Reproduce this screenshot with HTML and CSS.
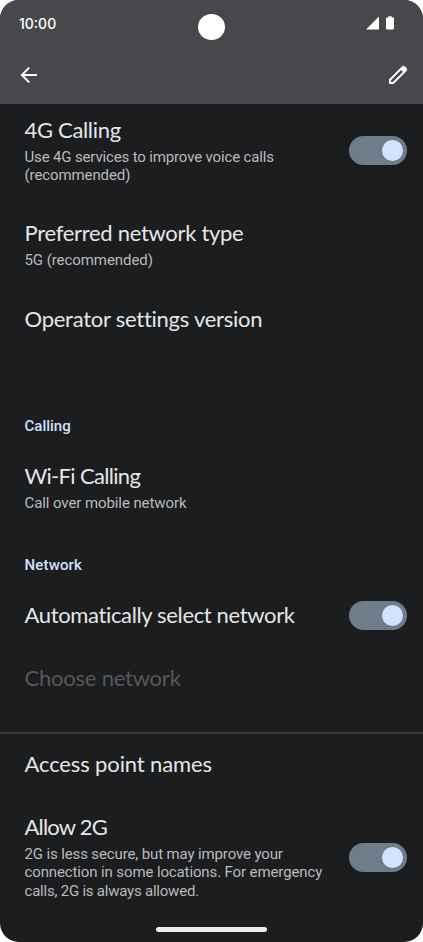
FILE: index.html
```html
<!DOCTYPE html>
<html lang="en">
<head>
<meta charset="utf-8">
<title>Mobile network settings</title>
<link rel="stylesheet" href="styles.css">
</head>
<body>
<div class="phone">
  <header class="header">
    <div class="status">
      <span class="clock">10:00</span>
      <span class="camera"></span>
      <svg class="status-icons" width="28" height="14" viewBox="0 0 28 14">
        <path d="M0 13.5 13 .5v13z"/>
        <path d="M22.3.3h3.4v1.3h1.1c.7 0 1.2.5 1.2 1.2v9.5c0 .7-.5 1.2-1.2 1.2h-5.6c-.7 0-1.2-.5-1.2-1.2V2.8c0-.7.5-1.2 1.2-1.2h1.1z"/>
      </svg>
    </div>
    <div class="toolbar">
      <svg class="back" width="24" height="24" viewBox="0 0 24 24"><path d="M20 12H5.5M12.2 4.6 4.9 12l7.3 7.4"/></svg>
      <svg class="edit" width="20" height="20" viewBox="0 0 20 20"><path class="shaft" d="M2 18v-3.2L14.4 2.4a1.5 1.5 0 0 1 2.1 0l1.1 1.1a1.5 1.5 0 0 1 0 2.1L5.2 18z"/><path class="tip" d="m12.4 4.4 2.4-2.4h2.4L18 4.8v.4l-2.4 2.4z"/></svg>
    </div>
  </header>
  <main class="list">
    <section class="row">
      <div class="text">
        <h2 class="title t-4g">4G Calling</h2>
        <p class="summary"><span class="s-use">Use 4G services to improve voice calls</span><br><span class="s-rec">(recommended)</span></p>
      </div>
      <span class="switch"></span>
    </section>
    <section class="row">
      <div class="text">
        <h2 class="title t-preferred">Preferred network type</h2>
        <p class="summary s-5g">5G (recommended)</p>
      </div>
    </section>
    <section class="row">
      <div class="text">
        <h2 class="title t-operator">Operator settings version</h2>
        <p class="summary two-lines"></p>
      </div>
    </section>
    <h3 class="category c-calling">Calling</h3>
    <section class="row">
      <div class="text">
        <h2 class="title t-wifi">Wi-Fi Calling</h2>
        <p class="summary s-over">Call over mobile network</p>
      </div>
    </section>
    <h3 class="category c-network">Network</h3>
    <section class="row compact">
      <div class="text"><h2 class="title t-auto">Automatically select network</h2></div>
      <span class="switch"></span>
    </section>
    <section class="row disabled">
      <div class="text">
        <h2 class="title t-choose">Choose network</h2>
        <p class="summary one-line"></p>
      </div>
    </section>
    <section class="row compact divided">
      <div class="text"><h2 class="title t-access">Access point names</h2></div>
    </section>
    <section class="row">
      <div class="text">
        <h2 class="title t-allow">Allow 2G</h2>
        <p class="summary"><span class="s-2g">2G is less secure, but may improve your</span><br><span class="s-conn">connection in some locations. For emergency</span><br><span class="s-calls">calls, 2G is always allowed.</span></p>
      </div>
      <span class="switch"></span>
    </section>
  </main>
  <div class="home-bar"></div>
</div>
</body>
</html>
```
FILE: styles.css
```css
* { box-sizing: border-box; }
body { margin: 0; background: #fff; }
h2, h3, p { margin: 0; font-weight: 400; }
.phone {
  position: relative;
  width: 423px;
  height: 942px;
  overflow: hidden;
  border-radius: 19px;
  background: #1c1d1f;
  color: #e6e6e8;
  font-family: Roboto, "Liberation Sans", sans-serif;
}
.header {
  position: relative;
  z-index: 1;
  height: 104px;
  background: #47484b;
  color: #fff;
}
.status {
  display: grid;
  grid-template-columns: 1fr 26px 1fr;
  align-items: center;
  height: 47px;
  padding: 0 29px 0 19px;
}
.clock { font: 500 14px/20px Inter, sans-serif; }
.camera {
  position: absolute;
  left: 198px;
  top: 14px;
  width: 27px;
  height: 26px;
  border-radius: 50%;
  background: #fff;
}
.status-icons { grid-column: 3; justify-self: end; margin-bottom: 1px; fill: #fff; }
.toolbar {
  display: flex;
  align-items: center;
  justify-content: space-between;
  height: 56px;
  padding: 0 15px 0 17px;
}
.back { fill: none; stroke: #fff; stroke-width: 2; }
.shaft { fill: none; stroke: #fff; stroke-width: 2; stroke-linejoin: round; }
.tip { fill: #fff; }

/* The list is scrolled slightly under the header. */
.list { margin-top: -5px; }
.row {
  display: flex;
  align-items: center;
  justify-content: space-between;
  padding: 18px 16px 18px 24.5px;
}
.title {
  height: 28px;
  font: 400 22px/26px Lato, sans-serif;
  white-space: nowrap;
}
.summary {
  margin-top: 2.65px;
  color: #b9babd;
  font-size: 15px;
  line-height: 18.4px;
  white-space: nowrap;
}
.two-lines { height: 36.8px; }
.one-line { height: 18.4px; }
.compact { height: 63.4px; }
.disabled { color: #57585a; }
.divided { height: 64px; border-top: 2px solid #38393b; }
.category {
  height: 54px;
  padding: 25px 25px 0 24.5px;
  color: #cfe0fa;
  font-size: 15px;
  font-weight: 500;
  line-height: 20px;
}
.switch {
  display: flex;
  justify-content: flex-end;
  width: 58px;
  height: 29px;
  padding: 4px;
  border-radius: 15px;
  background: #6f7c89;
}
.switch::after {
  content: "";
  width: 21px;
  height: 21px;
  border-radius: 50%;
  background: #d3e3fd;
}
.home-bar {
  position: absolute;
  left: 156px;
  bottom: 10px;
  width: 111px;
  height: 5px;
  border-radius: 3px;
  background: #efedf1;
}

.t-4g { letter-spacing: -.32px; }
.t-preferred { letter-spacing: -.3px; }
.t-operator { letter-spacing: -.25px; }
.t-wifi { letter-spacing: -.68px; }
.t-auto { letter-spacing: -.35px; }
.t-choose { letter-spacing: -.22px; }
.t-access { letter-spacing: -.13px; }
.t-allow { letter-spacing: -.8px; }
.s-use { letter-spacing: -.15px; }
.s-rec { letter-spacing: -.1px; }
.s-5g { letter-spacing: -.07px; }
.s-over { letter-spacing: -.09px; }
.s-2g { letter-spacing: -.13px; }
.s-conn { letter-spacing: -.12px; }
.s-calls { letter-spacing: -.22px; }
.c-network { letter-spacing: .16px; }
```
